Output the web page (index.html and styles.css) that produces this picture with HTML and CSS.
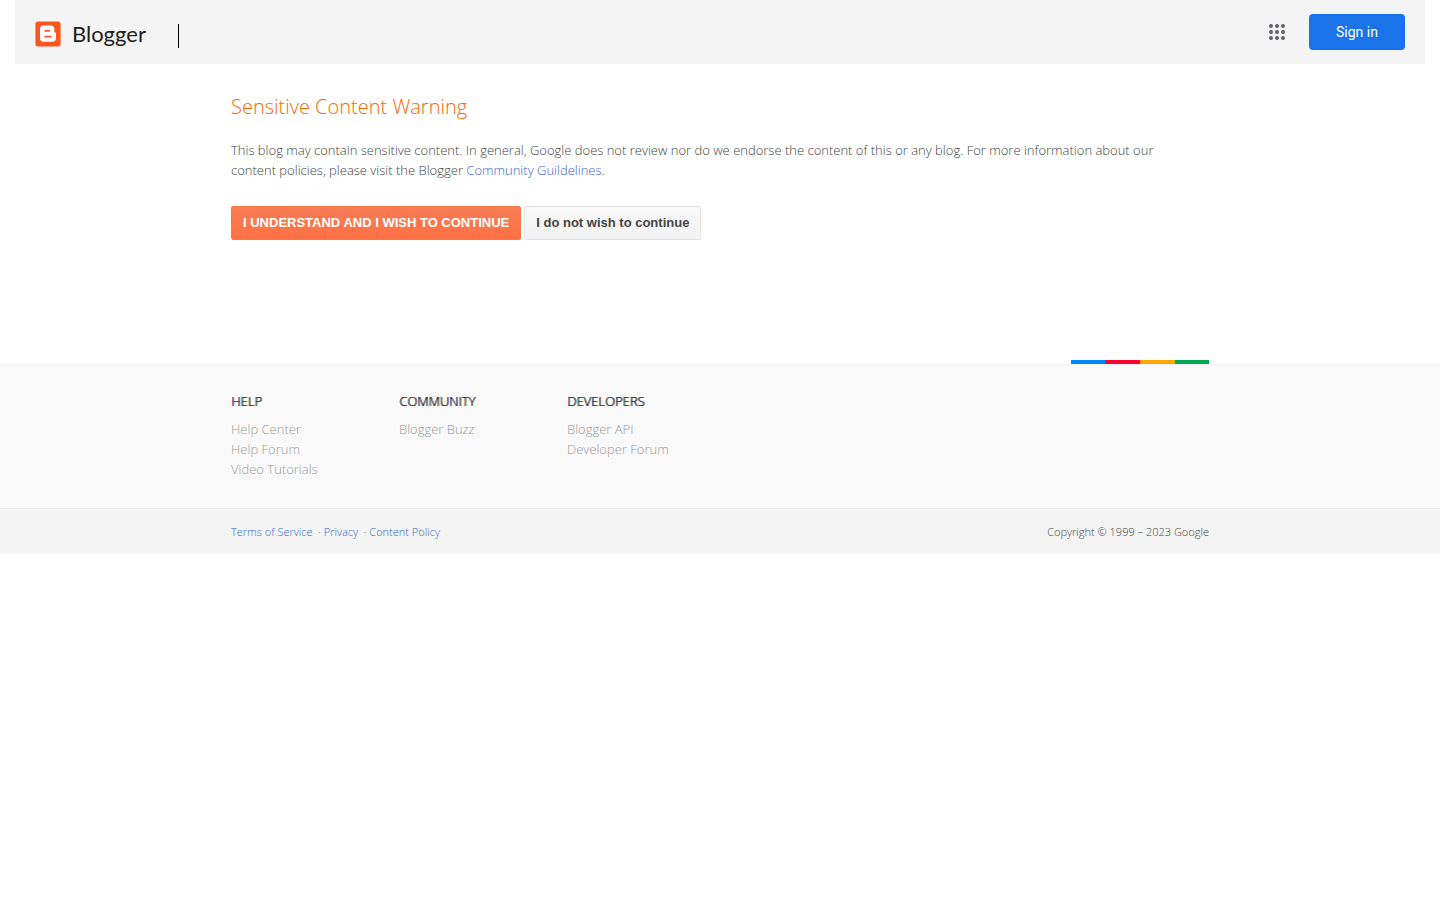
FILE: index.html
```
<!DOCTYPE html>
<html lang="en">
<head>
<meta charset="utf-8">
<title>Blogger: Sensitive Content Warning</title>
<link rel="stylesheet" href="styles.css">
</head>
<body>
<header class="topbar">
  <a class="brand" href="#">
    <svg class="brand-icon" viewBox="0 0 26 26" aria-hidden="true">
      <rect x=".4" y=".4" width="25.200" height="25.200" rx="2.500" fill="#ff5722"/>
      <path fill="#fff" d="M8.700 4.600h7a3.600 3.600 0 0 1 3.600 3.600v2.300c0 .7.300 1 .9 1 .5 0 .8.300.8.8v4.800a3.700 3.700 0 0 1-3.700 3.700H8.700A3.700 3.700 0 0 1 5 17.100V8.300a3.700 3.700 0 0 1 3.700-3.700z"/>
      <path d="M10.200 9.900h4.200M10.200 15.600h5.700" fill="none" stroke="#ff5722" stroke-width="1.800" stroke-linecap="round"/>
    </svg>
    <span class="brand-name">Blogger</span>
  </a>
  <span class="brand-divider"></span>
  <div class="account">
    <button class="apps" type="button" aria-label="Google apps">
      <svg viewBox="0 0 24 24" width="24" height="24" fill="#5f6368" aria-hidden="true">
        <circle cx="6" cy="6" r="2"/><circle cx="12" cy="6" r="2"/><circle cx="18" cy="6" r="2"/>
        <circle cx="6" cy="12" r="2"/><circle cx="12" cy="12" r="2"/><circle cx="18" cy="12" r="2"/>
        <circle cx="6" cy="18" r="2"/><circle cx="12" cy="18" r="2"/><circle cx="18" cy="18" r="2"/>
      </svg>
    </button>
    <a class="sign-in" href="#">Sign in</a>
  </div>
</header>
<main class="container warning">
  <h1>Sensitive Content Warning</h1>
  <p>This blog may contain sensitive content. In general, Google does not review nor do we endorse the content of this or any blog. For more information about our content policies, please visit the Blogger <a href="#">Community Guildelines</a>.</p>
  <div class="actions">
    <button class="button button-primary" type="button">I UNDERSTAND AND I WISH TO CONTINUE</button>
    <button class="button" type="button">I do not wish to continue</button>
  </div>
</main>
<footer>
  <div class="container stripe-row"><div class="stripe"><i class="blue"></i><i class="red"></i><i class="yellow"></i><i class="green"></i></div></div>
  <div class="footer-links">
    <nav class="container columns">
      <section><h2>HELP</h2><ul><li><a href="#">Help Center</a></li><li><a href="#">Help Forum</a></li><li><a href="#">Video Tutorials</a></li></ul></section>
      <section><h2>COMMUNITY</h2><ul><li><a href="#">Blogger Buzz</a></li></ul></section>
      <section><h2>DEVELOPERS</h2><ul><li><a href="#">Blogger API</a></li><li><a href="#">Developer Forum</a></li></ul></section>
    </nav>
  </div>
  <div class="footer-legal">
    <div class="container legal-row">
      <div><a href="#">Terms of Service</a>&nbsp; · <a href="#">Privacy</a>&nbsp; · <a href="#">Content Policy</a></div>
      <div>Copyright © 1999 – 2023 Google</div>
    </div>
  </div>
</footer>
</body>
</html>
```
FILE: styles.css
```
* { box-sizing: border-box; }
body { margin: 0; background: #fff; color: #444; font: 300 13px/20px "Open Sans", sans-serif; }
a { color: #3366cc; text-decoration: none; }
.container { max-width: 978px; margin: 0 auto; }

.topbar { display: flex; align-items: center; height: 64px; margin: 0 15px; padding: 0 20px; background: #f4f4f4; }
.brand { display: flex; align-items: center; gap: 11px; padding-top: 4px; color: #212121; }
.brand-icon { width: 26px; height: 26px; }
.brand-name { font: 400 22px/26px Lato, sans-serif; }
.brand-divider { width: 1px; height: 24px; margin: 8px 0 0 32px; background: #000; }
.account { display: flex; align-items: center; gap: 12px; margin-left: auto; }
.apps { display: flex; padding: 8px; border: 0; background: none; }
.sign-in { width: 96px; border-radius: 4px; background: #1a73e8; color: #fff; font: 400 14px/36px Roboto, sans-serif; text-align: center; }

.warning { padding: 32px 0 120px; }
h1 { margin: 0 0 22px; color: #ff6600; font-size: 20px; font-weight: 300; line-height: 22px; }
p { margin: 0 0 26px; padding-right: 24px; }
.actions { display: flex; gap: 3px; }
.button { height: 34px; padding: 0 11px; border: 1px solid #e2e2e2; border-radius: 2px; background: linear-gradient(#f9f9f9, #f2f2f2); color: #444; font: bold 13px/20px "Liberation Sans", Arial, sans-serif; }
.button-primary { border-color: #fb7748; background: linear-gradient(#f77d56, #ff7043); color: #fff; }

.stripe-row { display: flex; justify-content: flex-end; }
.stripe { display: grid; grid-template-columns: 34px 35px 35px 34px; height: 4px; }
.blue { background: #0089ff; }
.red { background: #ff0031; }
.yellow { background: #ffa700; }
.green { background: #00a854; }
.footer-links { padding: 26px 0 29px; border-top: 1px solid #f2f2f2; background: #f9f9f9; }
.columns { display: grid; grid-template-columns: repeat(3, 168px); }
.columns h2 { margin: 0 0 8px; color: #222; font-size: 13px; font-weight: 300; line-height: 20px; text-shadow: 1px 0 #444; }
.columns ul { margin: 0; padding: 0; list-style: none; }
.columns a { color: #999; }
.footer-legal { border-top: 1px solid #ebebeb; background: #f4f4f4; font-size: 11px; }
.legal-row { display: flex; justify-content: space-between; padding: 13px 0 12px; }
```
